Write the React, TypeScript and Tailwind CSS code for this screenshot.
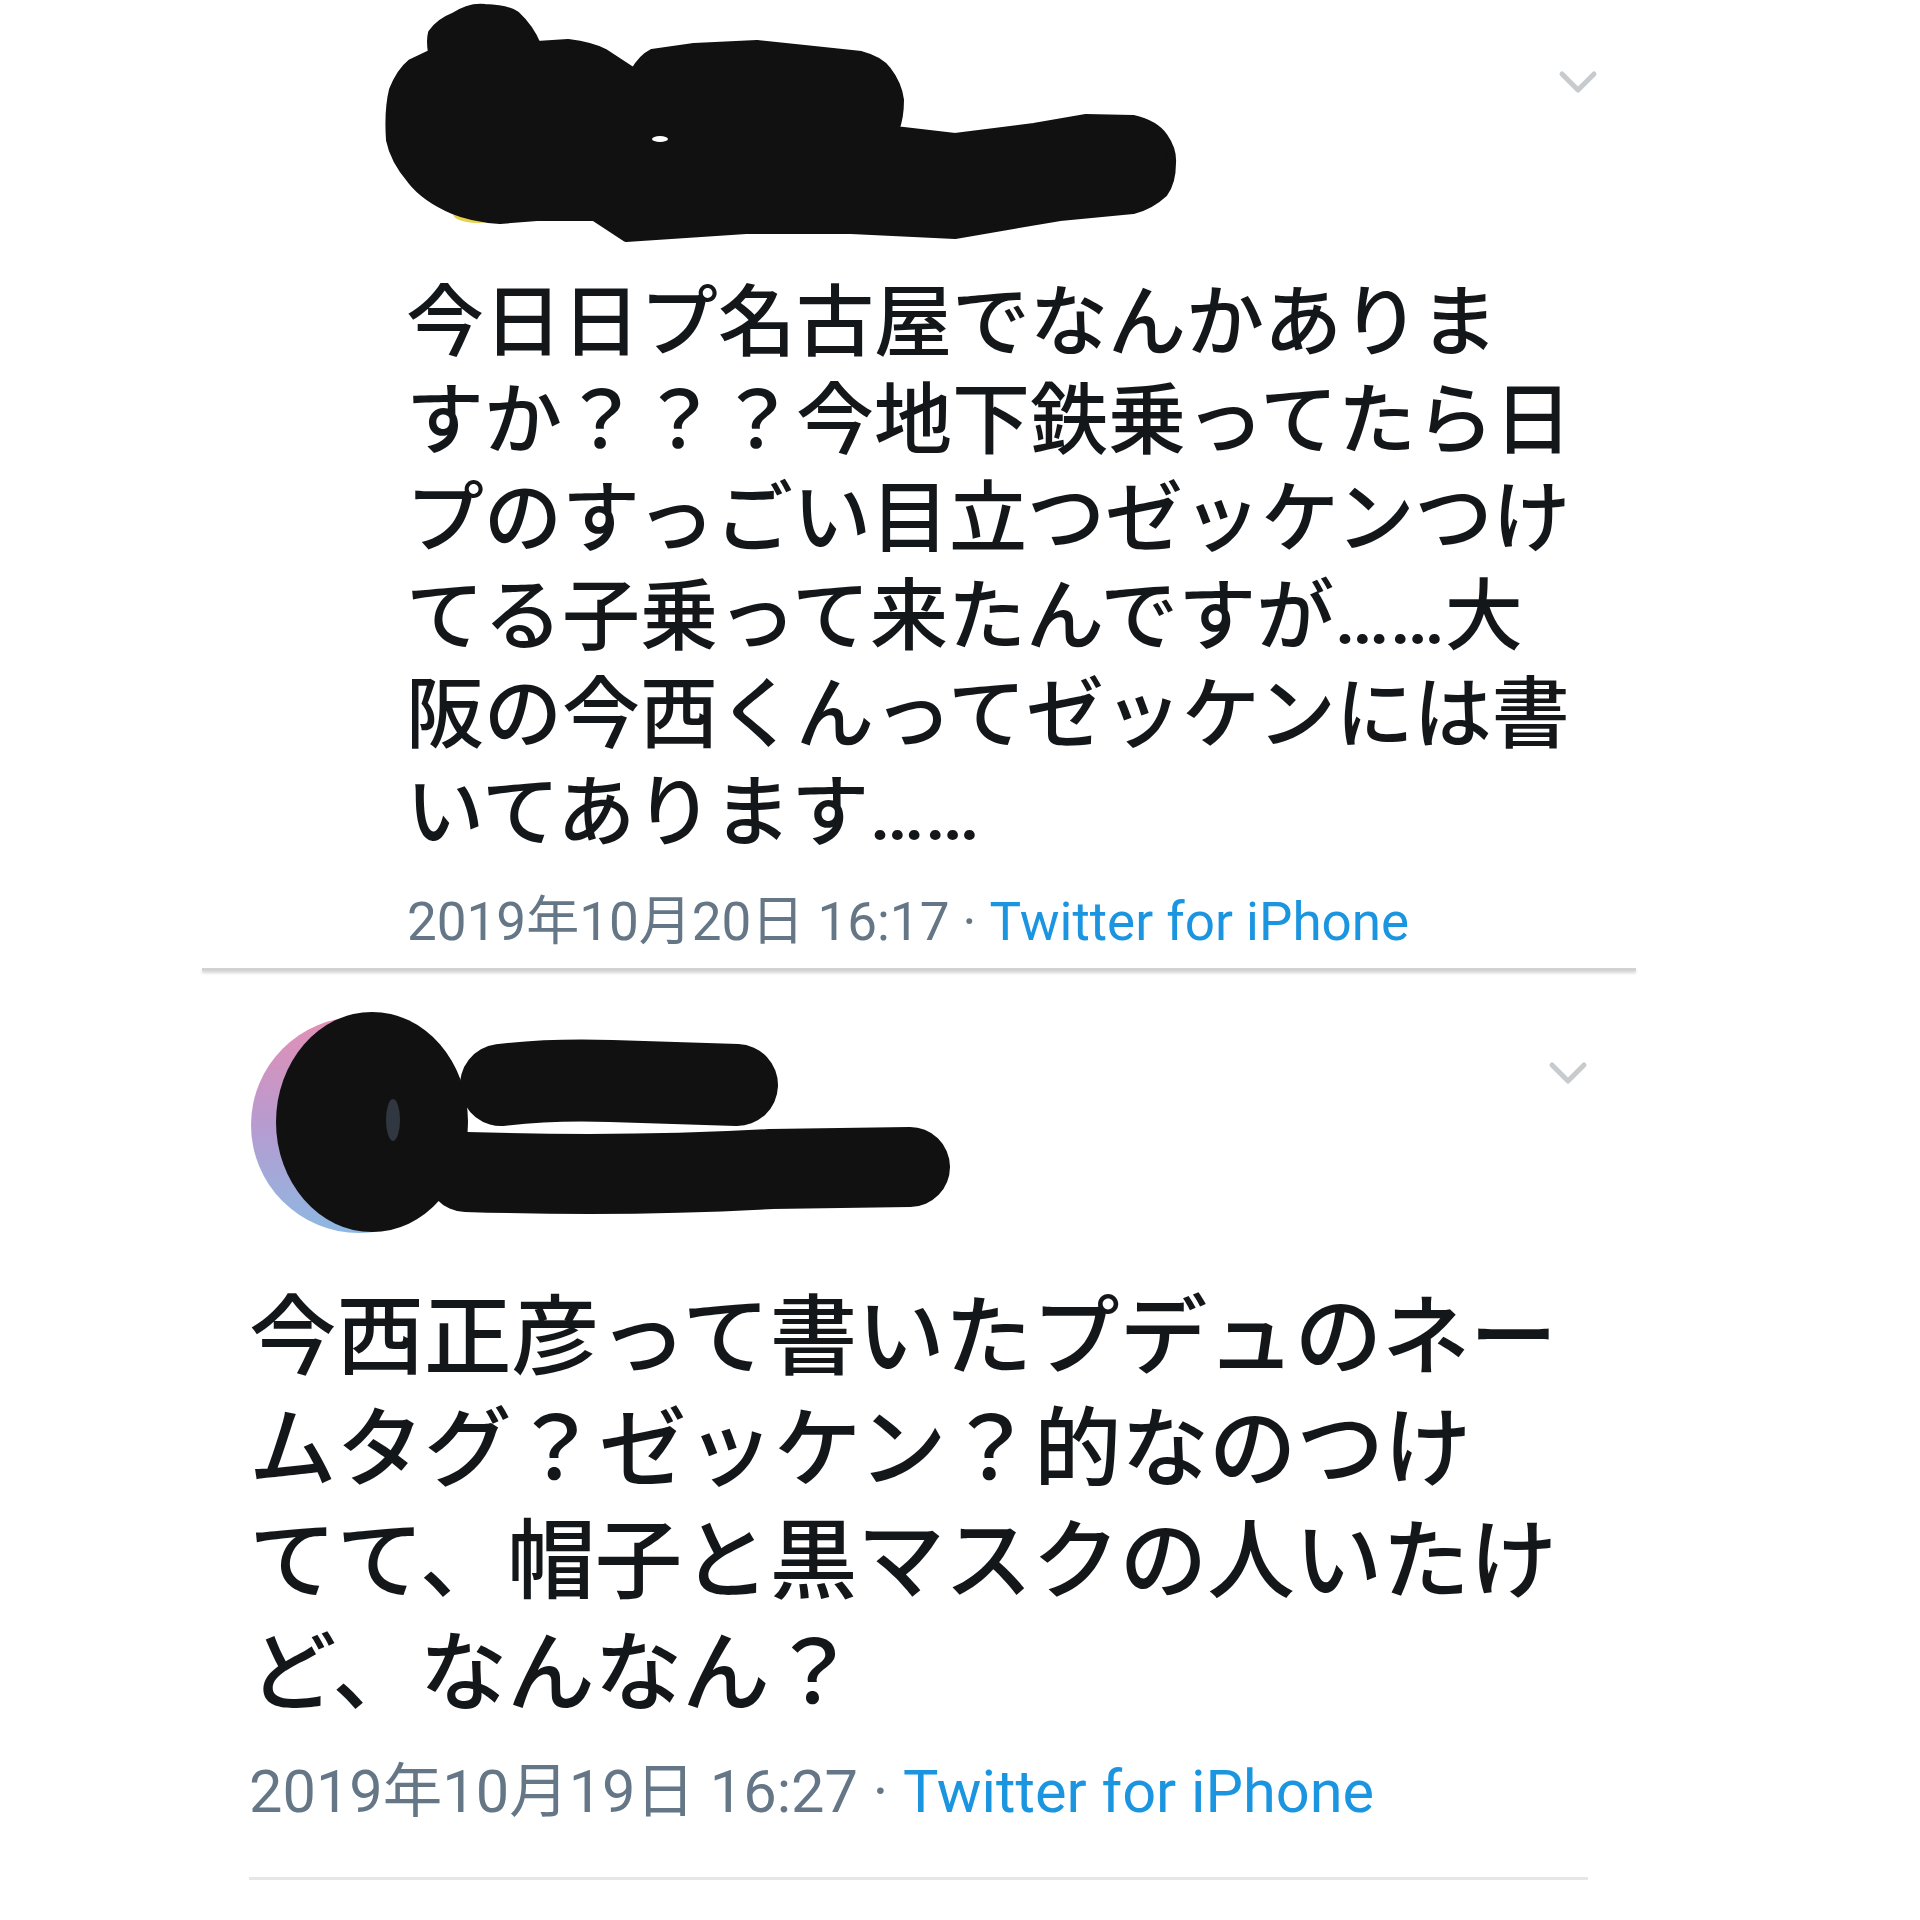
import React from 'react'

const tweet1Lines = [
  '今日日プ名古屋でなんかありま',
  'すか？？？今地下鉄乗ってたら日',
  'プのすっごい目立つゼッケンつけ',
  'てる子乗って来たんですが……大',
  '阪の今西くんってゼッケンには書',
  'いてあります……',
]

const tweet2Lines = [
  '今西正彦って書いたプデュのネー',
  'ムタグ？ゼッケン？的なのつけ',
  'てて、帽子と黒マスクの人いたけ',
  'ど、なんなん？',
]

function Chevron() {
  return (
    <svg width="40" height="24" viewBox="0 0 40 24" fill="none">
      <polyline
        points="4,4 20,20 36,4"
        stroke="#c7cbce"
        strokeWidth="5"
        strokeLinecap="round"
        strokeLinejoin="round"
      />
    </svg>
  )
}

// marker scribble over the first author's name
function Scribble1() {
  return (
    <svg width="800" height="250" viewBox="0 0 800 250">
      <ellipse cx="97" cy="214" rx="24" ry="9" fill="#e7d24a" />
      <path
        d="M73 17 Q90 6 105 8 Q128 9 136 15 Q150 28 157 45 L188 43 Q212 46 225 53 L254 72 Q262 58 272 53 L314 47 L377 44 L434 50 L481 55 Q500 60 507 70 Q518 84 520 100 Q520 118 515 130 L575 137 L654 127 L706 118 L753 119 Q775 124 784 137 Q793 150 792 163 Q792 182 784 193 Q770 206 753 210 L680 217 L575 235 L471 230 L366 230 L246 238 L214 217 L157 217 L120 220 Q92 218 73 210 Q45 198 31 180 Q14 160 10 140 Q8 110 13 90 Q20 72 31 63 L52 53 Q50 40 52 33 Q60 22 73 17 Z"
        fill="#111111"
        stroke="#111111"
        strokeWidth="8"
        strokeLinejoin="round"
      />
      <ellipse cx="280" cy="139" rx="8" ry="3" fill="#ffffff" />
    </svg>
  )
}

// avatar + marker scribble for the second author
function Scribble2() {
  return (
    <svg width="720" height="235" viewBox="0 0 720 235">
      <defs>
        <linearGradient id="av" x1="0" y1="0" x2="0" y2="1">
          <stop offset="0" stopColor="#e38fb4" />
          <stop offset="0.5" stopColor="#b79bd0" />
          <stop offset="1" stopColor="#8db8e2" />
        </linearGradient>
      </defs>
      <circle cx="108" cy="120" r="108" fill="url(#av)" />
      <ellipse cx="121" cy="117" rx="96" ry="110" fill="#111111" />
      <g stroke="#111111" strokeLinecap="round" fill="none">
        <path d="M250 80 Q300 74 360 76 L486 80" strokeWidth="82" />
        <path d="M215 167 Q380 172 520 164 L659 162" strokeWidth="80" />
      </g>
      <ellipse cx="142" cy="115" rx="7" ry="21" fill="#3b4450" opacity="0.75" />
    </svg>
  )
}

export default function App() {
  return (
    <div className="w-[1920px] h-[1920px] bg-white overflow-hidden text-[#14171a] font-['Roboto','Noto_Sans_CJK_JP',sans-serif]">
      {/* first tweet */}
      <article className="ml-[202px] w-[1434px]">
        <header className="flex h-[275px]">
          <div className="ml-[178px]">
            <Scribble1 />
          </div>
          <div className="ml-auto mr-[38px] mt-[70px]">
            <Chevron />
          </div>
        </header>
        <div className="pl-[204px] text-[78px] leading-[98px] font-medium">
          {tweet1Lines.map((line) => (
            <p key={line} className="whitespace-nowrap">
              {line}
            </p>
          ))}
        </div>
        <p className="mt-[29px] pl-[205px] text-[53px] leading-[60px] text-[#657786] whitespace-nowrap">
          2019年10月20日 16:17 · <span className="text-[#1b95e0]">Twitter for iPhone</span>
        </p>
        <div className="mt-[16px] h-[3px] bg-[#d2d2d2] shadow-[0_2px_3px_rgba(0,0,0,0.18)]"></div>
      </article>

      {/* second tweet */}
      <article className="ml-[249px] w-[1339px]">
        <header className="flex h-[311px]">
          <div className="mt-[34px] ml-[2px]">
            <Scribble2 />
          </div>
          <div className="ml-auto mt-[90px]">
            <Chevron />
          </div>
        </header>
        <div className="text-[87.5px] leading-[112px] font-medium">
          {tweet2Lines.map((line) => (
            <p key={line} className="whitespace-nowrap">
              {line}
            </p>
          ))}
        </div>
        <p className="mt-[29px] text-[59.5px] leading-[66px] text-[#657786] whitespace-nowrap">
          2019年10月19日 16:27 · <span className="text-[#1b95e0]">Twitter for iPhone</span>
        </p>
        <div className="mt-[52px] h-[3px] bg-[#e6e6e6]"></div>
      </article>
    </div>
  )
}
